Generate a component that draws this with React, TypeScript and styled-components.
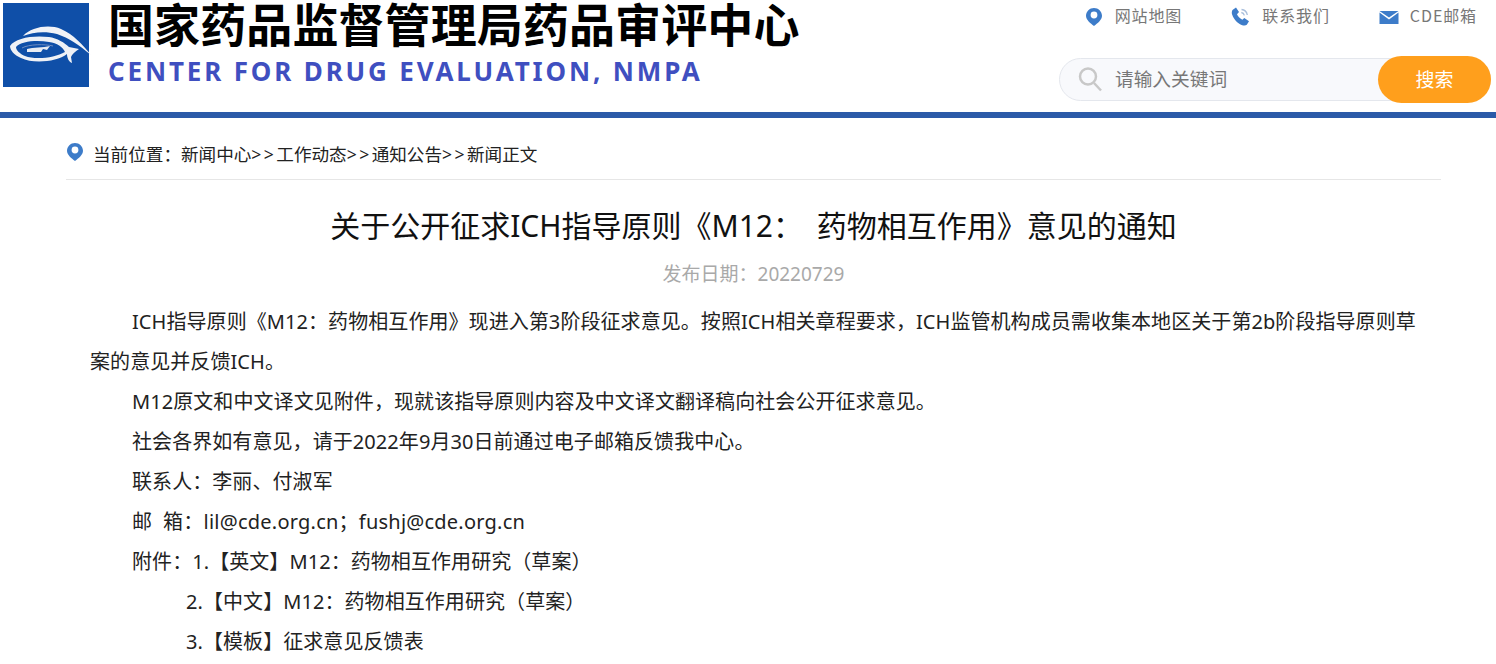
import styled, { createGlobalStyle } from 'styled-components';

const GlobalStyle = createGlobalStyle`
  html, body {
    margin: 0;
    padding: 0;
    background: #fff;
    overflow: hidden;
  }
  body {
    font-family: "Noto Sans", "Noto Sans CJK SC", sans-serif;
  }
`;

const Header = styled.header`
  display: flex;
  justify-content: space-between;
  height: 112px;
  padding: 0 5px 0 3px;
  border-bottom: 6px solid #2b5aa8;
`;

const Brand = styled.div`
  display: flex;
  gap: 19px;
`;

const LogoBox = styled.div`
  width: 86px;
  height: 84px;
  margin-top: 3px;
  background: #0f4fa8;
`;

const LogoArt = styled.svg`
  display: block;
  overflow: visible;
  filter: blur(0.5px);
`;

const BrandText = styled.div`
  display: flex;
  flex-direction: column;
`;

const BrandTitle = styled.div`
  height: 52px;
  line-height: 52px;
  font-family: "Liberation Sans", "Noto Sans CJK SC", sans-serif;
  font-size: 46px;
  font-weight: 700;
  letter-spacing: 0.1px;
  color: #000;
  white-space: nowrap;
`;

const BrandEnglish = styled.div`
  margin-top: 1px;
  font-family: "Noto Sans", sans-serif;
  font-size: 26px;
  line-height: 36px;
  font-weight: 700;
  letter-spacing: 2.85px;
  color: #3f4fc0;
  white-space: nowrap;
`;

const Tools = styled.div`
  display: flex;
  flex-direction: column;
  align-items: flex-end;
`;

const ToolLinks = styled.div`
  display: flex;
  gap: 49px;
  height: 58px;
  padding-right: 14px;
  padding-top: 4px;
  box-sizing: border-box;
`;

const ToolLink = styled.a`
  display: flex;
  align-items: flex-start;
  gap: 11px;
  font-family: "Noto Sans CJK SC", sans-serif;
  font-size: 16px;
  line-height: 22px;
  color: #777;
  letter-spacing: 0.9px;
`;

const ToolIcon = styled.svg`
  width: 20px;
  height: 20px;
  margin-top: 3px;
  flex: none;
`;

const PinSvg = styled.svg`
  width: 18px;
  height: 20px;
  margin-top: 1px;
  flex: none;
`;

const ToolPin = styled(PinSvg)`
  margin-top: 3px;
  margin-right: 1px;
`;

const SearchBar = styled.div`
  display: flex;
  align-items: center;
  width: 432px;
  height: 43px;
  box-sizing: border-box;
  border: 1px solid #e4e7ed;
  border-radius: 22px;
  background: #f8f9fc;
  position: relative;
  padding-left: 18px;
  gap: 9px;
`;

const SearchHint = styled.span`
  padding-bottom: 5px;
  font-family: "Noto Sans CJK SC", sans-serif;
  font-size: 18.7px;
  color: #777;
`;

const SearchButton = styled.button`
  position: absolute;
  right: -1px;
  top: -3px;
  width: 113px;
  height: 47px;
  padding: 0 0 2px;
  border: 0;
  border-radius: 24px;
  background: #ff9f1c;
  color: #fff;
  font-family: "Noto Sans CJK SC", sans-serif;
  font-size: 19px;
`;

const Main = styled.main`
  padding: 0 55px 0 66px;
`;

const Crumbs = styled.div`
  display: flex;
  align-items: flex-start;
  gap: 9px;
  height: 62px;
  padding-top: 23px;
  box-sizing: border-box;
  border-bottom: 1px solid #e6e6e6;
  font-family: "Noto Sans CJK SC", sans-serif;
  font-size: 17.6px;
  line-height: 26px;
  color: #222;
`;

const Sep = styled.span`
  font-family: "Noto Sans", sans-serif;
  letter-spacing: 2.4px;
`;

const Title = styled.h1`
  margin: 24px 0 0;
  text-align: center;
  font-family: "Noto Sans", "Noto Sans CJK SC", sans-serif;
  font-size: 30px;
  line-height: 44px;
  font-weight: 400;
  word-spacing: 6px;
  color: #111;
`;

const DateLine = styled.div`
  margin-top: 13px;
  text-align: center;
  font-family: "Noto Sans", "Noto Sans CJK SC", sans-serif;
  font-size: 19px;
  line-height: 26px;
  color: #a9a9a9;
`;

const Article = styled.article`
  margin-top: 15px;
  padding: 0 20px 0 24px;
  font-family: "Noto Sans", "Noto Sans CJK SC", sans-serif;
  font-size: 20px;
  line-height: 40px;
  letter-spacing: 0.07px;
  color: #222;
`;

const Para = styled.p<{ $indent?: number; $track?: number }>`
  margin: 0;
  text-indent: ${(p) => p.$indent ?? 42}px;
  ${(p) => (p.$track ? `letter-spacing: ${p.$track}px;` : '')}
`;

function Pin({ as: Svg = PinSvg }: { as?: typeof PinSvg }) {
  return (
    <Svg viewBox="1 0 18 20">
      <path
        fill="#3d7cc9"
        fillRule="evenodd"
        d="M10 1C5.600 1 2 4.500 2 8.800c0 4 4.500 7.700 8 10.200 3.500-2.500 8-6.200 8-10.200C18 4.500 14.400 1 10 1zm0 3.600a3.400 3.400 0 1 1 0 6.800 3.400 3.400 0 0 1 0-6.800z"
      />
    </Svg>
  );
}

export default function App() {
  return (
    <>
      <GlobalStyle />
      <Header>
        <Brand>
          <LogoBox>
            <LogoArt width="86" height="84" viewBox="0 0 86 84">
              <path
                fill="#f1f3f7"
                d="M20 33C28 24 46 21 58 26 70 31 80 42 88 52 76 42 66 35 54 31 42 28 30 29 20 33z"
              />
              <path
                fill="#eef1f6"
                fillRule="evenodd"
                d="M7 43C12 35 30 32 46 34 54 35 62 40 66 44L76 46C72 49 69 51 68 54L69 60C66 59 64 55 64 51 54 59 30 61 18 55 11 52 7 47 7 43zM13 44C18 38 34 37 46 39 54 40 60 44 62 49 52 55 32 57 22 53 17 51 13 47 13 44z"
              />
              <path fill="none" stroke="#6f8cc0" strokeWidth="1" d="M19 45C26 41 42 41 50 43" />
              <path fill="#e8ecf3" d="M24 46C30 44 40 45 47 43L44 47 40 46 38 49C33 49 27 49 24 49z" />
            </LogoArt>
          </LogoBox>
          <BrandText>
            <BrandTitle>国家药品监督管理局药品审评中心</BrandTitle>
            <BrandEnglish>CENTER FOR DRUG EVALUATION, NMPA</BrandEnglish>
          </BrandText>
        </Brand>
        <Tools>
          <ToolLinks>
            <ToolLink>
              <Pin as={ToolPin} />
              网站地图
            </ToolLink>
            <ToolLink>
              <ToolIcon viewBox="0 0 20 20">
                <path
                  fill="#3d7cc9"
                  d="M1.500 3 5 .5 8 5 6 7.300c.8 2 2.800 4.300 5.300 5.400l2-1.800 4.700 3.300-2.200 3.600c-1.200 1-3.200.9-5.200.1C6.500 16.400 2.800 12.300 1.200 7.800.6 6 .7 4.300 1.500 3z"
                />
                <path
                  fill="none"
                  stroke="#a9bfdc"
                  strokeWidth="1.300"
                  d="M10.500 2.500c3 .3 5.300 2.500 5.800 5.500M10.300 5.500c1.500.2 2.700 1.300 3 2.800"
                />
              </ToolIcon>
              联系我们
            </ToolLink>
            <ToolLink>
              <ToolIcon viewBox="0 0 20 20">
                <path fill="#3d7cc9" d="M.5 4h19L10 10.500zM.500 5.500l9.500 7 9.500-7V17H.500z" />
              </ToolIcon>
              CDE邮箱
            </ToolLink>
          </ToolLinks>
          <SearchBar>
            <svg width="28" height="28" viewBox="0 0 28 28">
              <circle cx="10" cy="10.500" r="8" fill="none" stroke="#c8c8c8" strokeWidth="2.500" />
              <path stroke="#c8c8c8" strokeWidth="2.500" d="M16 17l7 7.500" />
            </svg>
            <SearchHint>请输入关键词</SearchHint>
            <SearchButton>搜索</SearchButton>
          </SearchBar>
        </Tools>
      </Header>
      <Main>
        <Crumbs>
          <Pin />
          <span>
            当前位置：新闻中心<Sep>&gt;&gt;</Sep>工作动态<Sep>&gt;&gt;</Sep>通知公告<Sep>&gt;&gt;</Sep>新闻正文
          </span>
        </Crumbs>
        <Title>关于公开征求ICH指导原则《M12： 药物相互作用》意见的通知</Title>
        <DateLine>发布日期：20220729</DateLine>
        <Article>
          <Para>
            ICH指导原则《M12：药物相互作用》现进入第3阶段征求意见。按照ICH相关章程要求，ICH监管机构成员需收集本地区关于第2b阶段指导原则草案的意见并反馈ICH。
          </Para>
          <Para>M12原文和中文译文见附件，现就该指导原则内容及中文译文翻译稿向社会公开征求意见。</Para>
          <Para>社会各界如有意见，请于2022年9月30日前通过电子邮箱反馈我中心。</Para>
          <Para>联系人：李丽、付淑军</Para>
          <Para $track={0.23}>邮&nbsp;&nbsp;箱：lil@cde.org.cn；fushj@cde.org.cn</Para>
          <Para>附件：1.【英文】M12：药物相互作用研究（草案）</Para>
          <Para $indent={96}>2.【中文】M12：药物相互作用研究（草案）</Para>
          <Para $indent={96}>3.【模板】征求意见反馈表</Para>
        </Article>
      </Main>
    </>
  );
}
